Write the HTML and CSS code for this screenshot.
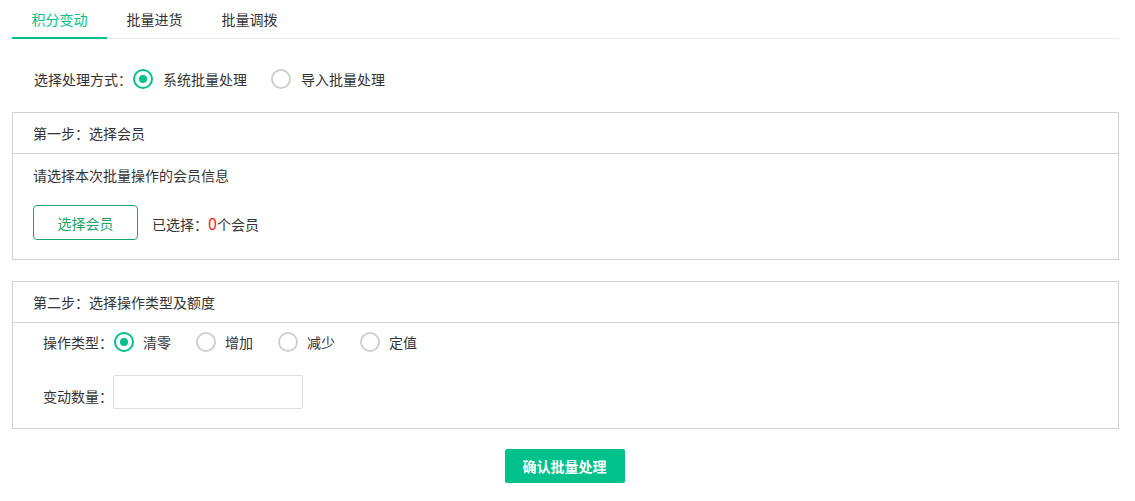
FILE: index.html
```html
<!DOCTYPE html>
<html lang="zh">
<head>
<meta charset="utf-8">
<title>积分变动</title>
<link rel="stylesheet" href="styles.css">
</head>
<body>
<div class="page">
  <div class="tabs">
    <div class="tab active">积分变动</div>
    <div class="tab">批量进货</div>
    <div class="tab">批量调拨</div>
  </div>

  <div class="mode-row">
    <span class="mode-label">选择处理方式：</span>
    <label class="radio checked"><span class="dot"></span><span class="rtext">系统批量处理</span></label>
    <label class="radio"><span class="dot"></span><span class="rtext">导入批量处理</span></label>
  </div>

  <div class="panel">
    <div class="panel-head">第一步：选择会员</div>
    <div class="panel-body step1">
      <div class="hint">请选择本次批量操作的会员信息</div>
      <div class="member-row">
        <button class="btn-outline">选择会员</button>
        <span class="selected">已选择：<span class="count">0</span>个会员</span>
      </div>
    </div>
  </div>

  <div class="panel second">
    <div class="panel-head">第二步：选择操作类型及额度</div>
    <div class="panel-body step2">
      <div class="form-row type-row">
        <span class="field-label">操作类型：</span>
        <label class="radio small checked"><span class="dot"></span><span class="rtext">清零</span></label>
        <label class="radio small"><span class="dot"></span><span class="rtext">增加</span></label>
        <label class="radio small"><span class="dot"></span><span class="rtext">减少</span></label>
        <label class="radio small"><span class="dot"></span><span class="rtext">定值</span></label>
      </div>
      <div class="form-row qty-row">
        <span class="field-label qty-label">变动数量：</span>
        <input class="qty-input" type="text">
      </div>
    </div>
  </div>

  <div class="actions">
    <button class="btn-primary">确认批量处理</button>
  </div>
</div>
</body>
</html>
```

FILE: styles.css
```css
* { box-sizing: border-box; }
html, body {
  margin: 0;
  padding: 0;
  background: #fff;
}
body {
  font-family: "Noto Sans CJK SC", "Noto Sans", sans-serif;
  font-size: 14px;
  color: #333;
}
.page {
  padding: 0 16px 0 12px;
}
.tabs {
  display: flex;
  height: 39px;
  border-bottom: 1px solid #e8e8e8;
}
.tab {
  width: 95px;
  padding-top: 8px;
  text-align: center;
  font-size: 14px;
  line-height: 22px;
  color: #333;
}
.tab.active {
  color: #00c08b;
  border-bottom: 2px solid #00c08b;
  height: 39px;
}
.mode-row {
  display: flex;
  align-items: center;
  height: 40px;
  margin-top: 20px;
  padding-left: 22px;
}
.mode-label {
  width: 99px;
}
.radio {
  display: inline-flex;
  align-items: center;
  margin-right: 24px;
}
.dot {
  width: 20px;
  height: 20px;
  border: 2px solid #cfcfcf;
  border-radius: 50%;
  display: inline-flex;
  align-items: center;
  justify-content: center;
}
.radio.checked .dot {
  border-color: #00c08b;
}
.radio.checked .dot::after {
  content: "";
  width: 8px;
  height: 8px;
  border-radius: 50%;
  background: #00c08b;
}
.rtext {
  margin-left: 10px;
}
.radio.small {
  margin-right: 25px;
}
.radio.small .rtext {
  margin-left: 9px;
}
.panel {
  margin-top: 13px;
  border: 1px solid #d2d2d2;
}
.panel.second {
  margin-top: 21px;
}
.panel-head {
  height: 41px;
  line-height: 40px;
  padding-left: 20px;
  font-size: 14px;
  border-bottom: 1px solid #d2d2d2;
}
.step1 {
  padding: 10px 20px 19px;
}
.hint {
  line-height: 22px;
  font-size: 14px;
}
.member-row {
  display: flex;
  align-items: center;
  margin-top: 19px;
}
.btn-outline {
  width: 105px;
  height: 35px;
  border: 1px solid #1aa56c;
  border-radius: 4px;
  background: #fff;
  color: #1aa56c;
  font-family: inherit;
  font-size: 14px;
  padding: 0;
}
.selected {
  margin-left: 14px;
  font-size: 14px;
}
.count {
  color: #ff1a1a;
  font-size: 16px;
}
.step2 {
  padding: 6px 30px 19px;
}
.form-row {
  display: flex;
  align-items: center;
}
.type-row {
  height: 26px;
}
.field-label {
  width: 71px;
}
.qty-row {
  margin-top: 20px;
}
.qty-label {
  width: 70px;
  padding-top: 8px;
}
.qty-input {
  width: 190px;
  height: 34px;
  border: 1px solid #dcdcdc;
  border-radius: 2px;
  font-family: inherit;
}
.actions {
  display: flex;
  justify-content: center;
  margin-top: 20px;
  padding-right: 2px;
}
.btn-primary {
  width: 120px;
  height: 34px;
  border: none;
  border-radius: 2px;
  background: #00c08b;
  color: #fff;
  font-family: inherit;
  font-size: 14px;
  font-weight: bold;
  padding: 0;
}
```
